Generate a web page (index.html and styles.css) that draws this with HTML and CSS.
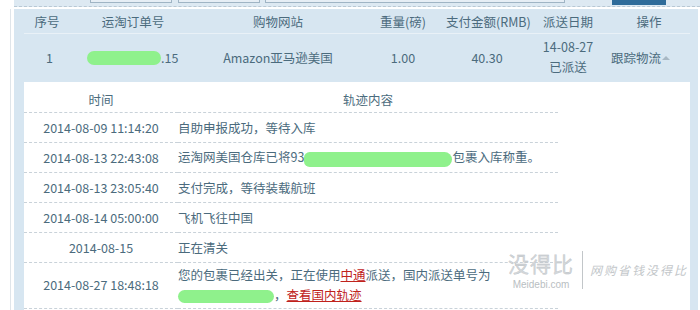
FILE: index.html
```html
<!DOCTYPE html>
<html>
<head>
<meta charset="utf-8">
<link rel="stylesheet" href="styles.css">
</head>
<body>
<div class="page">
  <div class="topbar">
    <span class="tb-box b1"></span><span class="tb-box b2"></span><span class="tb-box b3"></span><span class="tb-btn"></span>
  </div>
  <div class="wrap">
    <div class="panel">
      <div class="grid head">
        <div>序号</div><div>运淘订单号</div><div>购物网站</div><div>重量(磅)</div><div>支付金额(RMB)</div><div>派送日期</div><div>操作</div>
      </div>
      <div class="grid row">
        <div class="num">1</div>
        <div class="order"><span class="blob b-order"></span>.15</div>
        <div>Amazon亚马逊美国</div>
        <div>1.00</div>
        <div>40.30</div>
        <div class="two">14-08-27<br>已派送</div>
        <div class="op">跟踪物流<span class="arrow"></span></div>
      </div>
      <div class="detail">
        <table class="track">
          <tr class="th"><td class="t">时间</td><td class="c center">轨迹内容</td></tr>
          <tr><td class="t">2014-08-09 11:14:20</td><td class="c">自助申报成功，等待入库</td></tr>
          <tr><td class="t">2014-08-13 22:43:08</td><td class="c">运淘网美国仓库已将93<span class="blob b-mid"></span>包裹入库称重。</td></tr>
          <tr><td class="t">2014-08-13 23:05:40</td><td class="c">支付完成，等待装载航班</td></tr>
          <tr><td class="t">2014-08-14 05:00:00</td><td class="c">飞机飞往中国</td></tr>
          <tr><td class="t">2014-08-15</td><td class="c">正在清关</td></tr>
          <tr class="tall"><td class="t">2014-08-27 18:48:18</td><td class="c">您的包裹已经出关，正在使用<a class="red">中通</a>派送，国内派送单号为<br><span class="blob b-low"></span>，<a class="red">查看国内轨迹</a></td></tr>
        </table>
        <div class="watermark">
          <div class="wm-logo"><div class="wm-big">没得比</div><div class="wm-small">Meidebi.com</div></div>
          <div class="wm-bar"></div>
          <div class="wm-slogan">网购省钱没得比</div>
        </div>
      </div>
    </div>
  </div>
</div>
</body>
</html>
```
FILE: styles.css
```css
* { box-sizing: border-box; }
html, body { margin: 0; padding: 0; background: #fff; }
body {
  width: 700px; height: 310px; overflow: hidden;
  font-family: "Noto Sans CJK SC", "Noto Sans", sans-serif;
  font-size: 12.5px; color: #4b6b7d;
}
.page { position: relative; }
.topbar {
  height: 7px; margin-left: 14px; background: #dde9f2;
  border-bottom: 1px dashed #b8c8d4; position: relative; display: flex;
}
.tb-box { height: 3px; border: 1px solid #9fb4c4; border-top: none; background: #e6eef5; }
.b1 { margin-left: 76px; width: 82px; }
.b2 { margin-left: 6px; width: 82px; }
.b3 { margin-left: 5px; width: 300px; }
.tb-btn { margin-left: 47px; width: 54px; height: 5px; background: #2f6c9a; }
.wrap { margin-top: 2px; border-left: 1px solid #dfe5ea; margin-left: 10px; padding-left: 3px; }
.panel { background: #d7e6f1; width: 684px; height: 302px; padding-left: 10px; }
.grid { display: grid; grid-template-columns: 46px 126px 164px 86px 82px 80px 88px; text-align: center; align-items: center; white-space: nowrap; }
.head { height: 25px; border-bottom: 1px solid #e9f1f7; margin-right: 8px; grid-template-columns: 46px 126px 164px 86px 82px 80px 82px; }
.row { height: 47px; }
.num { padding-left: 5px; }
.two { line-height: 20px; padding-bottom: 1px; }
.order { display: flex; align-items: center; justify-content: flex-start; padding-left: 17px; }
.blob { display: inline-block; background: #8ff18c; border-radius: 8px; vertical-align: middle; }
.b-order { width: 74px; height: 14px; }
.b-mid { width: 148px; height: 15px; border-radius: 6px 8px 8px 6px; }
.b-low { width: 96px; height: 13px; border-radius: 7px; }
.op { text-align: left; padding-left: 3px; }
.arrow { display: inline-block; width: 0; height: 0; border-left: 4px solid transparent; border-right: 4px solid transparent; border-bottom: 4px solid #a8b8c4; margin-left: 1px; vertical-align: 3px; }
.detail { background: #fff; margin-right: 8px; margin-top: 1px; height: 240px; position: relative; }
.track { border-collapse: collapse; width: 534px; }
.track td { padding: 0; border-bottom: 1px dashed #c9d2d9; height: 30px; }
.track .th td { height: 30px; padding-top: 6px; }
.track .t { width: 154px; text-align: center; }
.track .c { padding-left: 0; }
.track .center { text-align: center; padding-right: 0; }
.track .tall td { height: 46px; line-height: 20px; }
.red { color: #c0221c; text-decoration: underline; }
.watermark { position: absolute; left: 484px; top: 166px; display: flex; align-items: center; color: #c6cacd; white-space: nowrap; }
.wm-logo { display: flex; flex-direction: column; align-items: center; width: 66px; }
.wm-big { font-size: 21px; line-height: 30px; height: 30px; color: #d3d7da; letter-spacing: 1px; -webkit-text-stroke: 0.3px #b5babe; }
.wm-small { font-family: "Liberation Sans", sans-serif; font-size: 10px; line-height: 12px; margin-top: 1px; color: #b9bec2; }
.wm-bar { width: 1px; height: 38px; background: #c2c6c9; margin-left: 8px; margin-right: 7px; }
.wm-slogan { font-size: 12px; color: #c3c7ca; letter-spacing: 2px; font-style: italic; }
```
